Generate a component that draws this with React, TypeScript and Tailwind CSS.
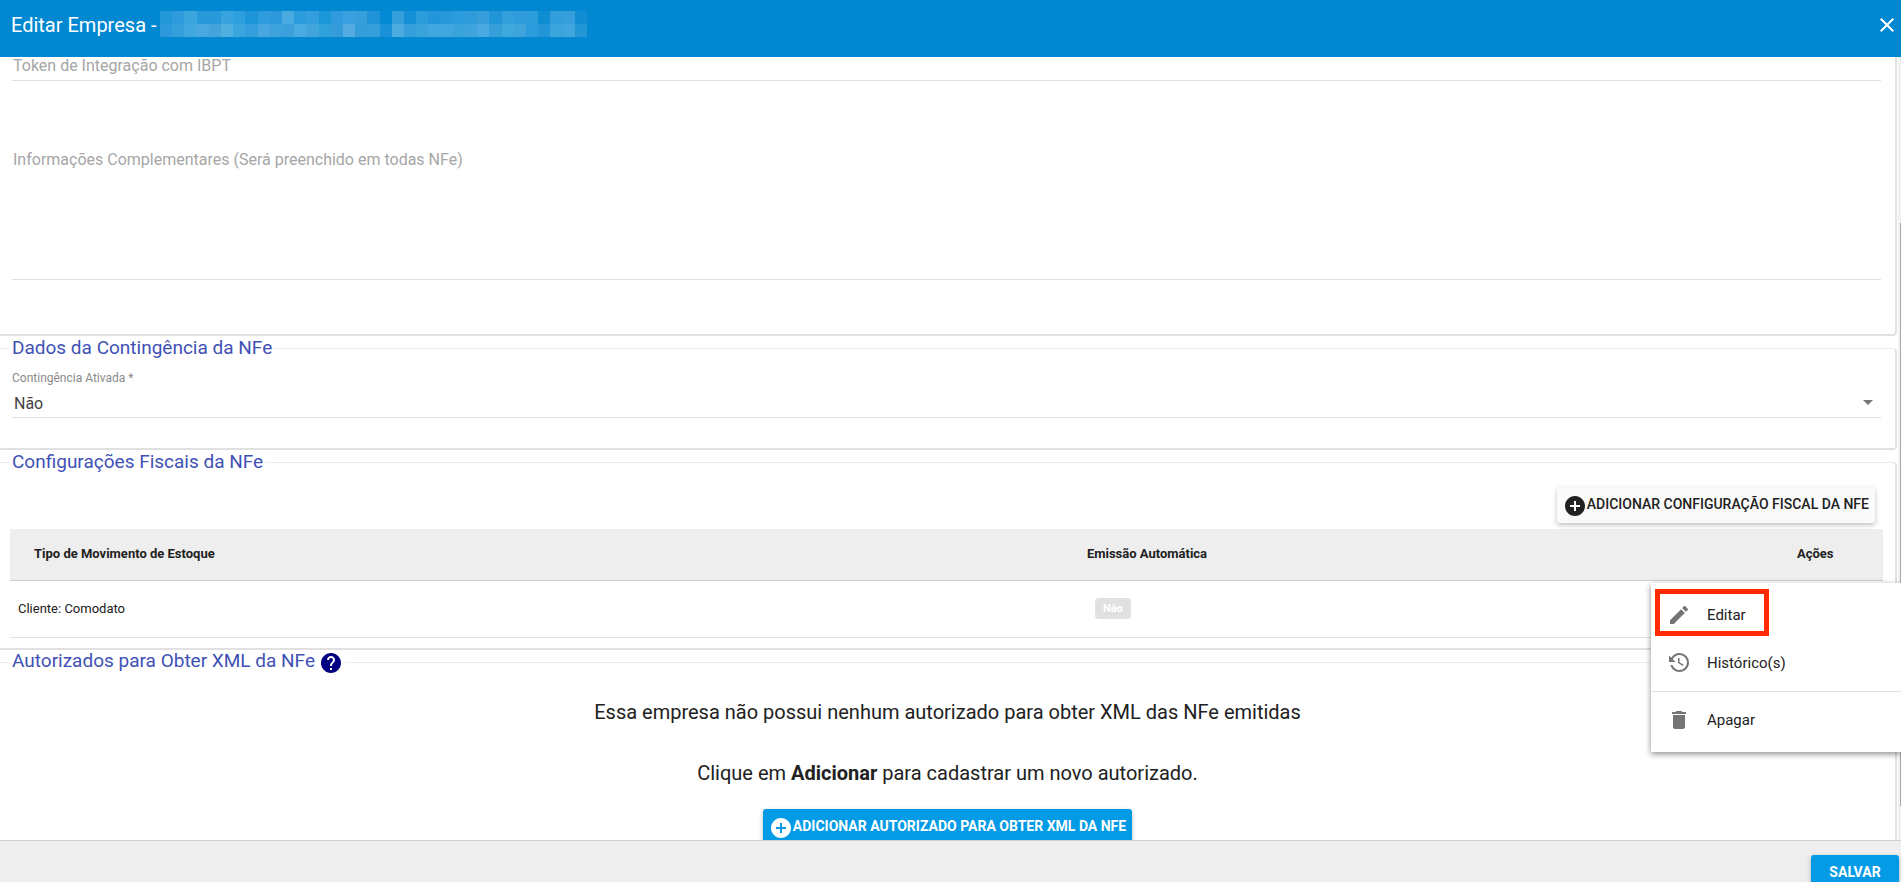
import { useState } from "react";
import type { ReactNode } from "react";
import { MdAddCircle, MdClose, MdDelete, MdEdit, MdHelp } from "react-icons/md";

// Masked company name, two rows of tiles
const MASK_TOP = [
  "#2398d9", "#2f9bdd", "#3ba5de", "#2899d9", "#289ad9", "#39a3dd", "#2d9fde", "#1d95d8", "#2f9cdd", "#2b99db",
  "#4aabe0", "#2a9bdb", "#329edb", "#1c97d8", "#2f9bde", "#3ba0df", "#369fda", "#2093d7", "#0388d4", "#359fdb",
  "#1590d6", "#2c9bda", "#2296d8", "#2799da", "#2a9bdc", "#2f9bda", "#379eda", "#2096d8", "#339fdb", "#309cdb",
  "#2c9ddb", "#0e8dd3", "#319edb", "#369fdb", "#128dd4",
];
const MASK_BOTTOM = [
  "#2c99dc", "#359fdb", "#40a8de", "#4ba7df", "#43a4dc", "#4fb0e0", "#3ba5dd", "#339edb", "#48a6e0", "#3ea3dd",
  "#3ba0dc", "#4aabe0", "#42a6dd", "#2fa1da", "#349cda", "#54abe1", "#359cda", "#369fdb", "#1990d7", "#4dabdf",
  "#369eda", "#3ba3dc", "#40a8de", "#3fa7dd", "#3aa3dc", "#3fa3de", "#49a9e0", "#369fda", "#40a9dc", "#3fa3dc",
  "#2a9bdb", "#2296d8", "#3ba4dd", "#41a5de", "#2396d6",
];

function MaskedName() {
  return (
    <svg width="427" height="26" viewBox="0 0 35 2" preserveAspectRatio="none" shapeRendering="crispEdges" aria-hidden="true">
      {MASK_TOP.map((c, i) => <rect key={`t${i}`} x={i} y={0} width={1} height={1} fill={c} />)}
      {MASK_BOTTOM.map((c, i) => <rect key={`b${i}`} x={i} y={1} width={1} height={1} fill={c} />)}
    </svg>
  );
}

function HistoryIcon() {
  return (
    <svg viewBox="0 0 24 24" className="w-6 h-6" fill="currentColor" aria-hidden="true">
      <path d="M11 7v5.11l4.71 2.79.79-1.28-4-2.37V7m0-5C8.97 2 5.91 3.92 4.27 6.77L2 4.5V11h6.5L5.75 8.25C6.96 5.73 9.5 4 12.5 4a7.5 7.5 0 0 1 7.5 7.5 7.5 7.5 0 0 1-7.5 7.5c-3.27 0-6.03-2.09-7.06-5h-2.1c1.1 4.03 4.77 7 9.16 7 5.24 0 9.5-4.25 9.5-9.5A9.5 9.5 0 0 0 12.5 2z" />
    </svg>
  );
}

interface SectionProps {
  title: ReactNode;
  children: ReactNode;
}

function Section({ title, children }: SectionProps) {
  return (
    <fieldset className="min-w-0 border-t border-r-2 border-b-2 border-t-[#ececec] border-r-[#e2e2e2] border-b-[#e0e0e0] rounded-r-[4px]">
      <legend className="ml-[10px] h-[25px] pb-[2px] px-[2px] flex items-center gap-1 text-[19px] leading-6 text-[#3f51b5]">{title}</legend>
      {children}
    </fieldset>
  );
}

interface MenuItemProps {
  icon: ReactNode;
  label: string;
}

function MenuItem({ icon, label }: MenuItemProps) {
  return (
    <button type="button" role="menuitem" className="w-full h-12 px-4 flex items-center gap-4 text-[15px] text-left">
      <span className="text-[#757575]">{icon}</span>
      {label}
    </button>
  );
}

export default function App() {
  const [contingencia, setContingencia] = useState("nao");

  return (
    <div className="relative h-screen flex flex-col overflow-hidden bg-white text-[#212121] font-[Roboto,sans-serif]">
      <header className="h-[57px] shrink-0 pl-[11px] pr-[2px] pb-2 flex items-center bg-[#0288d1] text-white">
        <h1 className="text-[20px] leading-6 whitespace-nowrap">Editar Empresa -</h1>
        <div className="ml-[3px] pb-px"><MaskedName /></div>
        <button type="button" aria-label="Fechar" className="ml-auto"><MdClose className="w-6 h-6" /></button>
      </header>

      <div className="flex-1 min-h-0 flex">
        <main className="flex-1 min-w-0 mr-px overflow-hidden">
          <section className="pl-3 pr-[14px] pb-[54px] border-r-2 border-b-2 border-r-[#e2e2e2] border-b-[#e0e0e0] rounded-br-[4px]">
            <input
              aria-label="Token de Integração com IBPT"
              placeholder="Token de Integração com IBPT"
              className="block w-full h-6 pb-[6px] px-px border-b border-[#e0e0e0] text-[16px] placeholder:text-[#a6a6a6] outline-none"
            />
            <textarea
              aria-label="Informações Complementares"
              placeholder="Informações Complementares (Será preenchido em todas NFe)"
              className="block w-full h-[130px] mt-[69px] px-px border-b border-[#e0e0e0] text-[16px] leading-5 placeholder:text-[#a6a6a6] resize-none outline-none"
            />
          </section>

          <Section title="Dados da Contingência da NFe">
            <div className="pl-3 pr-[14px] pt-[9px] pb-[30px]">
              <label htmlFor="contingencia" className="block text-[12px] leading-4 text-[#8a8a8a]">Contingência Ativada *</label>
              <div className="relative">
                <select
                  id="contingencia"
                  value={contingencia}
                  onChange={(e) => setContingencia(e.target.value)}
                  className="block w-full h-8 px-[2px] pt-1 border-b border-[#e0e0e0] text-[16px] text-[#424242] appearance-none outline-none"
                >
                  <option value="nao">Não</option>
                  <option value="sim">Sim</option>
                </select>
                <svg viewBox="0 0 10 5" className="absolute right-2 top-[14px] w-[10px] h-[5px] text-[#757575] pointer-events-none" aria-hidden="true">
                  <path d="M0 0h10L5 5z" fill="currentColor" />
                </svg>
              </div>
            </div>
          </Section>

          <Section title="Configurações Fiscais da NFe">
            <div className="pl-[10px] pr-3 pb-[10px]">
              <div className="pt-3 pb-[6px] pr-2 flex justify-end">
                <button type="button" className="h-9 px-[6px] pb-[2px] flex items-center rounded-[3px] bg-[#fafafa] text-[14px] font-medium shadow-[0_2px_5px_rgba(0,0,0,0.26)]">
                  <MdAddCircle className="w-6 h-6 mt-1" />
                  ADICIONAR CONFIGURAÇÃO FISCAL DA NFE
                </button>
              </div>
              <table className="w-full table-fixed text-left text-[13px]">
                <thead>
                  <tr className="h-[51px] bg-[#eee] border-b border-[#cfcfcf]">
                    <th className="w-[56%] pl-6 pb-px font-bold">Tipo de Movimento de Estoque</th>
                    <th className="pl-7 pb-px font-bold">Emissão Automática</th>
                    <th className="w-[110px] pl-6 pb-px font-bold">Ações</th>
                  </tr>
                </thead>
                <tbody>
                  <tr className="h-[57px] border-b border-[#e0e0e0]">
                    <td className="pl-2">Cliente: Comodato</td>
                    <td className="pl-9">
                      <span className="inline-block px-2 rounded-[4px] bg-[#e0e0e0] text-[11px] leading-[21px] font-bold text-white">Não</span>
                    </td>
                    <td />
                  </tr>
                </tbody>
              </table>
            </div>
          </Section>

          <Section title={<>Autorizados para Obter XML da NFe <MdHelp className="w-6 h-6 mt-1 text-[#000080]" /></>}>
            <div className="pt-[25px] pb-8 flex flex-col items-center text-[20px] leading-6">
              <p>Essa empresa não possui nenhum autorizado para obter XML das NFe emitidas</p>
              <p className="mt-[37px]">Clique em <strong className="font-bold">Adicionar</strong> para cadastrar um novo autorizado.</p>
              <button type="button" className="mt-6 h-9 px-[6px] pb-[2px] flex items-center rounded-[3px] bg-[#039be5] text-[14px] font-bold text-white shadow-[0_2px_5px_rgba(0,0,0,0.26)]">
                <MdAddCircle className="w-6 h-6 mt-1" />
                ADICIONAR AUTORIZADO PARA OBTER XML DA NFE
              </button>
            </div>
          </Section>
        </main>

        {/* Scroll track */}
        <div className="w-[3px] shrink-0 bg-[#f1f1f1] flex flex-col items-end pt-[166px] pb-[34px]">
          <div className="w-px flex-1 bg-[#a8a8a8]" />
        </div>
      </div>

      <footer className="h-[42px] shrink-0 pt-[14px] pr-[2px] flex items-start justify-end border-t border-[#cfcfcf] bg-[#eee]">
        <button type="button" className="h-9 w-[88px] pb-[2px] shrink-0 rounded-[3px] bg-[#039be5] text-[14px] font-bold text-white shadow-[0_2px_5px_rgba(0,0,0,0.26)]">SALVAR</button>
      </footer>

      {/* Row actions menu */}
      <div role="menu" className="absolute right-0 top-[583px] w-[250px] py-2 bg-white shadow-[0_2px_6px_rgba(0,0,0,0.45)]">
        <MenuItem icon={<MdEdit className="w-6 h-6" />} label="Editar" />
        <MenuItem icon={<HistoryIcon />} label="Histórico(s)" />
        <hr className="my-1 border-[#e0e0e0]" />
        <MenuItem icon={<MdDelete className="w-6 h-6" />} label="Apagar" />
        <div className="absolute left-1 top-[6px] w-[114px] h-[47px] border-[5px] border-[#ff2a00] pointer-events-none" />
      </div>
    </div>
  );
}
